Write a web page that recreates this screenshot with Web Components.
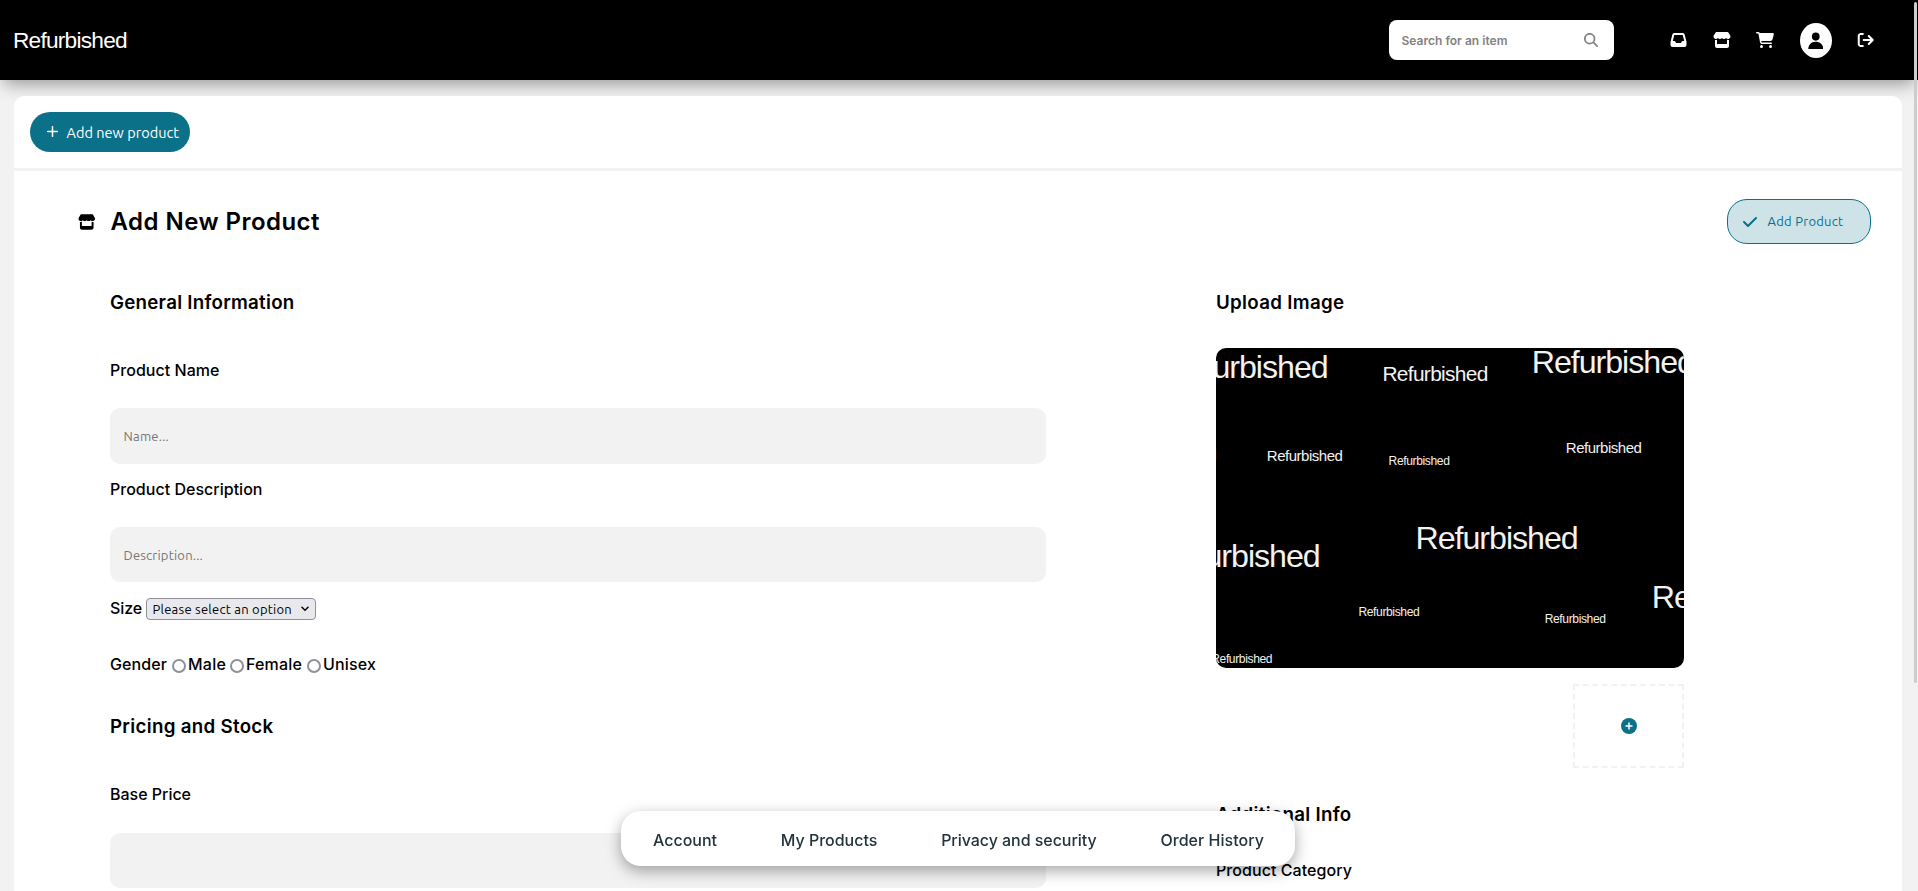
<!DOCTYPE html>
<html lang="en">
<head>
<meta charset="utf-8">
<title>Refurbished</title>
<style>
  html, body { margin: 0; height: 100%; overflow: hidden; background: #f2f2f2; }
  body { font-family: Inter, "Liberation Sans", sans-serif; font-weight: 500; font-size: 16px; color: #000; }
</style>
</head>
<body>
<refurb-app></refurb-app>
<script>
const define = (name, html, setup) => customElements.define(name, class extends HTMLElement {
  connectedCallback() {
    if (this.shadowRoot) return;
    const t = document.createElement('template');
    t.innerHTML = html;
    this.attachShadow({ mode: 'open' }).append(t.content.cloneNode(true));
    if (setup) setup.call(this);
  }
});

/* Text run tracked so that its advance equals the w attribute. */
define('fit-text', `<style>:host{display:inline-block;white-space:nowrap;line-height:inherit}span{display:inline-block}</style><span><slot></slot></span>`, function () {
  const span = this.shadowRoot.querySelector('span');
  const w = +this.getAttribute('w'), n = this.textContent.length;
  span.style.letterSpacing = '0px';
  span.style.letterSpacing = ((w - span.getBoundingClientRect().width) / n) + 'px';
});

const ICONS = {
  search: ['0 0 512 512', '<path d="M416 208c0 45.9-14.9 88.300-40 122.700L502.600 457.400c12.500 12.500 12.500 32.800 0 45.300s-32.800 12.500-45.300 0L330.700 376c-34.400 25.200-76.800 40-122.700 40C93.100 416 0 322.900 0 208S93.100 0 208 0S416 93.100 416 208zM208 352a144 144 0 1 0 0-288 144 144 0 1 0 0 288z"/>'],
  inbox: ['0 0 512 512', '<path d="M121 32C91.600 32 66 52 58.900 80.500L1.900 308.400C.6 313.500 0 318.700 0 323.900V416c0 35.300 28.700 64 64 64H448c35.300 0 64-28.700 64-64V323.900c0-5.200-.6-10.400-1.900-15.500l-57-227.900C446 52 420.400 32 391 32H121zm0 64H391l48 192H387.800c-12.100 0-23.200 6.800-28.600 17.700l-14.300 28.600c-5.400 10.800-16.500 17.700-28.600 17.700H195.800c-12.100 0-23.200-6.800-28.600-17.700l-14.300-28.600c-5.400-10.800-16.500-17.700-28.600-17.700H73L121 96z"/>'],
  store: ['0 0 576 512', '<path d="M547.600 103.800L490.300 13.100C485.200 5 476.100 0 466.400 0H109.600C99.900 0 90.800 5 85.700 13.100L28.300 103.800c-29.600 46.800-3.400 111.900 51.900 119.400c4 .5 8.100 .8 12.100 .8c26.100 0 49.300-11.400 65.200-29c15.900 17.600 39.100 29 65.200 29c26.100 0 49.300-11.400 65.200-29c15.900 17.600 39.100 29 65.200 29c26.200 0 49.300-11.400 65.200-29c16 17.600 39.100 29 65.200 29c4.100 0 8.100-.3 12.100-.8c55.500-7.400 81.800-72.500 52.100-119.400zM499.700 254.900c-5.300 .7-10.700 1.100-16.200 1.100c-12.400 0-24.300-1.900-35.400-5.300V384H128V250.600c-11.200 3.500-23.200 5.400-35.600 5.400c-5.500 0-11-.4-16.300-1.100c-4.100-.6-8.100-1.300-12.100-2.300V448c0 35.300 28.700 64 64 64H448c35.300 0 64-28.700 64-64V252.600c-4 1-8 1.800-12.300 2.300z"/>'],
  cart: ['0 0 576 512', '<path d="M0 24C0 10.700 10.700 0 24 0H69.500c22 0 41.500 12.800 50.600 32h411c26.300 0 45.500 25 38.600 50.400l-41 152.300c-8.500 31.400-37 53.300-69.500 53.300H170.700l5.400 28.500c2.200 11.300 12.100 19.500 23.600 19.500H488c13.300 0 24 10.700 24 24s-10.700 24-24 24H199.700c-34.600 0-64.300-24.600-70.700-58.500L77.400 54.500c-.7-3.800-4-6.500-7.900-6.500H24C10.700 48 0 37.300 0 24zM128 464a48 48 0 1 1 96 0 48 48 0 1 1-96 0zm336-48a48 48 0 1 1 0 96 48 48 0 1 1 0-96z"/>'],
  user: ['0 0 16 17', '<ellipse cx="8" cy="4.200" rx="4" ry="4.200"/><path d="M.3 17c.2-4.600 3.200-7.400 7.700-7.400s7.500 2.800 7.700 7.400z"/>'],
  logout: ['0 0 512 512', '<path d="M502.600 278.600c12.500-12.500 12.500-32.800 0-45.300l-128-128c-12.500-12.500-32.800-12.500-45.300 0s-12.500 32.800 0 45.300L402.700 224H192c-17.700 0-32 14.300-32 32s14.300 32 32 32H402.700l-73.400 73.400c-12.500 12.500-12.500 32.800 0 45.300s32.800 12.500 45.300 0l128-128zM160 96c17.700 0 32-14.300 32-32s-14.300-32-32-32H96C43 32 0 75 0 128V384c0 53 43 96 96 96h64c17.700 0 32-14.300 32-32s-14.300-32-32-32H96c-17.700 0-32-14.300-32-32V128c0-17.700 14.300-32 32-32h64z"/>'],
  plus: ['0 0 11 11', '<path d="M5.500.7v9.600M.7 5.500h9.600" fill="none" stroke="currentColor" stroke-width="1.500" stroke-linecap="round"/>'],
  check: ['0 0 448 512', '<path d="M438.600 105.400c12.500 12.500 12.500 32.800 0 45.300l-256 256c-12.500 12.500-32.800 12.500-45.300 0l-128-128c-12.500-12.500-12.500-32.800 0-45.300s32.800-12.500 45.300 0L160 338.700 393.400 105.400c12.500-12.500 32.800-12.500 45.300 0z"/>'],
  add: ['0 0 16 16', '<circle cx="8" cy="8" r="8"/><path d="M8 5v6M5 8h6" fill="none" stroke="#fff" stroke-width="1.500" stroke-linecap="round"/>'],
  chevron: ['0 0 8 6', '<path d="M1 1.200l3 3 3-3" fill="none" stroke="currentColor" stroke-width="1.500" stroke-linecap="round"/>']
};
define('ui-icon', `<style>:host{display:block;flex:none}svg{display:block;width:100%;height:100%;fill:currentColor}</style>`, function () {
  const [box, body] = ICONS[this.getAttribute('name')];
  this.shadowRoot.innerHTML += `<svg viewBox="${box}">${body}</svg>`;
});

define('app-header', `<style>
  :host{display:flex;align-items:center;height:80px;box-sizing:border-box;background:#000;color:#fff;padding:0 44px 0 13px;position:relative;
    box-shadow:0 8px 16px -4px rgba(0,0,0,.38)}
  .logo{font:400 22.700px/28px "Liberation Sans",Arial,sans-serif;letter-spacing:-.034em;margin-right:auto}
  .search{display:flex;align-items:center;justify-content:space-between;width:225px;height:40px;box-sizing:border-box;padding:0 16px 0 12.500px;background:#fff;border-radius:8px;
    color:#828282;font-size:12px;font-weight:600;line-height:20px;margin-right:56px}
  .search fit-text{margin-top:1px}
  .search ui-icon{width:14px;height:14px;margin-bottom:1px}
  .i{height:16px}
  .inbox{width:17px;margin-right:25.500px}
  .store{width:18px;margin-right:25px;margin-bottom:1px}
  .cart{width:18px;margin-right:26px;margin-bottom:1px}
  .avatar{display:flex;align-items:center;justify-content:center;width:32px;height:35px;background:#fff;border-radius:50%;color:#000;margin-right:25px;margin-top:1px}
  .avatar ui-icon{width:15.500px;height:17.500px}
  .out{width:17.500px}
</style>
<div class="logo">Refurbished</div>
<div class="search"><fit-text w="106">Search for an item</fit-text><ui-icon name="search"></ui-icon></div>
<ui-icon class="i inbox" name="inbox"></ui-icon><ui-icon class="i store" name="store"></ui-icon><ui-icon class="i cart" name="cart"></ui-icon>
<div class="avatar"><ui-icon name="user"></ui-icon></div><ui-icon class="i out" name="logout"></ui-icon>`);

define('pill-button', `<style>
  :host{display:flex;align-items:center;box-sizing:border-box;border-radius:20px;font-family:Ubuntu,"Noto Sans",sans-serif;font-weight:400}
  :host([kind=solid]){width:160px;height:40px;padding-left:16px;gap:9px;background:#0b7189;color:#fff;font-size:14.500px}
  :host([kind=soft]){width:144px;height:45px;padding-left:15px;gap:11.500px;border:1px solid #0b7189;background:#cee3e8;color:#0b7189;font-size:13px}
</style><slot></slot>`);

define('form-field', `<style>
  :host{display:block;height:119px}
  .label{line-height:20px;height:20px;margin-bottom:var(--gap,28px)}
  .box{height:var(--box,56px);border-radius:10px;background:#f2f2f2;display:flex;align-items:center;padding-left:13.500px;color:#757575;font:400 13px/20px Ubuntu,"Noto Sans",sans-serif}
</style><div class="label"><slot name="label"></slot></div><div class="box"><slot></slot></div>`);

define('select-box', `<style>
  :host{display:inline-flex;align-items:center;box-sizing:border-box;width:170px;height:22px;border:1px solid #8f8f9d;border-radius:4px;background:#e9e9ed;
    padding:0 6px 0 5.500px;justify-content:space-between;font:400 13px/18px Ubuntu,"Noto Sans",sans-serif}
  ui-icon{width:8px;height:6px}
</style><slot></slot><ui-icon name="chevron"></ui-icon>`);

define('radio-option', `<style>
  :host{display:flex;align-items:center;height:20px;line-height:20px}
  i{width:14px;height:14px;box-sizing:border-box;border:2px solid #8f8f9d;border-radius:50%;margin:3px 2px 0 0;background:#fff}
</style><i></i><slot></slot>`);

/* Wordmark sheet: left edge, baseline and size of each word in the picture. */
const WORDS = [[-50.600,29.700,32.200],[166.400,33,20.900],[315.700,24.700,32.200],[-75.500,111.700,15],[50.800,112.700,15],[172.600,116.700,12.100],[349.800,105.300,15],
  [-58.500,219.300,32.200],[199.500,201.300,32.200],[435.700,259.700,32.200],[142.400,268,12.100],[328.700,275,12.100],[-4.800,315.300,12.100]];
define('product-image', `<style>
  :host{display:block;width:468px;height:320px;border-radius:10px;overflow:hidden;background:#000}
  svg{display:block;font-family:"Liberation Sans",Arial,sans-serif;font-weight:400;fill:#f2f2f2}
</style>`, function () {
  this.shadowRoot.innerHTML += `<svg width="468" height="320">${WORDS.map(([x, y, s]) => `<text x="${x}" y="${y}" font-size="${s}" letter-spacing="${(-.032 * s).toFixed(3)}">Refurbished</text>`).join('')}</svg>`;
});

define('bottom-nav', `<style>
  :host{position:fixed;left:621px;top:811px;width:674px;height:55px;box-sizing:border-box;padding:2px 31px 0 32px;display:flex;align-items:center;justify-content:space-between;
    background:#fff;border-radius:20px;color:#22333b;line-height:20px;box-shadow:0 5px 15px rgba(0,0,0,.35)}
</style><fit-text w="64">Account</fit-text><fit-text w="96.500">My Products</fit-text><fit-text w="155.500">Privacy and security</fit-text><fit-text w="103.500">Order History</fit-text>`);

define('product-form', `<style>
  :host{display:block}
  .head{display:flex;align-items:center;padding:28px 31px 0 64px;height:45px}
  .head .store{width:17.500px;height:16px;margin:0 15.500px 0 -.5px}
  h1{font-size:24px;font-weight:600;line-height:30px;margin:0 auto 0 0;letter-spacing:0}
  h2{font-size:18.720px;font-weight:600;line-height:24px;height:24px;margin:0}
  .cols{display:grid;grid-template-columns:936px 468px;column-gap:170px;padding:47px 0 0 96px}
  .cols > div{min-width:0}
  .fields{padding-top:45px}
  .size{display:flex;height:22px;gap:4px;line-height:20px}
  .gender{display:flex;height:20px;line-height:20px;margin-top:34px}
  .gender > fit-text{margin-right:5px}
  .price{margin-top:41px}
  product-image{margin-top:33px}
  .check{width:14px;height:16px;margin-right:-1px}
  pill-button fit-text{margin-bottom:1px}
  .drop{width:111px;height:84px;box-sizing:border-box;border:2px dashed #f2f2f2;margin:16px 0 0 auto;display:flex;align-items:center;justify-content:center;color:#0b7189}
  .drop ui-icon{width:16px;height:16px}
  .info{margin-top:35px}
  .cat{line-height:20px;margin-top:33px}
</style>
<div class="head"><ui-icon class="store" name="store"></ui-icon><h1><fit-text w="209.500">Add New Product</fit-text></h1>
<pill-button kind="soft"><ui-icon class="check" name="check"></ui-icon><fit-text w="76">Add Product</fit-text></pill-button></div>
<div class="cols"><div>
  <h2><fit-text w="184.500">General Information</fit-text></h2>
  <div class="fields">
    <form-field><fit-text slot="label" w="109.500">Product Name</fit-text><fit-text w="45.500">Name...</fit-text></form-field>
    <form-field style="--box:55px"><fit-text slot="label" w="152.500">Product Description</fit-text><fit-text w="79.500">Description...</fit-text></form-field>
  </div>
  <div class="size"><fit-text w="32">Size</fit-text><select-box><fit-text w="139.500">Please select an option</fit-text></select-box></div>
  <div class="gender"><fit-text w="57">Gender</fit-text><radio-option style="width:58px"><fit-text w="38">Male</fit-text></radio-option><radio-option style="width:77px"><fit-text w="56">Female</fit-text></radio-option><radio-option><fit-text w="53">Unisex</fit-text></radio-option></div>
  <h2 class="price"><fit-text w="163.500">Pricing and Stock</fit-text></h2>
  <div class="fields"><form-field style="--gap:29px;--box:55px"><fit-text slot="label" w="81">Base Price</fit-text></form-field></div>
</div><div>
  <h2><fit-text w="128.500">Upload Image</fit-text></h2>
  <product-image></product-image>
  <div class="drop"><ui-icon name="add"></ui-icon></div>
  <h2 class="info"><fit-text w="135.500">Additional Info</fit-text></h2>
  <div class="cat"><fit-text w="136">Product Category</fit-text></div>
</div></div>`);

define('refurb-app', `<style>
  :host{display:block;height:100vh;overflow:hidden}
  .card{margin:16px 16px 0 14px;background:#fff;border-radius:10px 10px 0 0;height:795px;position:relative;overflow:hidden}
  .bar{height:72px;border-bottom:3px solid #f2f2f2;box-sizing:content-box;padding:0 16px;display:flex;align-items:center}
  .plus{width:11px;height:11px;margin:0 0 1px .5px}
  .thumb{position:fixed;right:1px;top:2px;width:3px;height:681px;background:#cdcdcd;border-radius:2px}
</style>
<app-header></app-header>
<div class="card"><div class="bar"><pill-button kind="solid"><ui-icon class="plus" name="plus"></ui-icon><fit-text w="112.500">Add new product</fit-text></pill-button></div>
<product-form></product-form></div>
<bottom-nav></bottom-nav><div class="thumb"></div>`);
</script>
</body>
</html>
